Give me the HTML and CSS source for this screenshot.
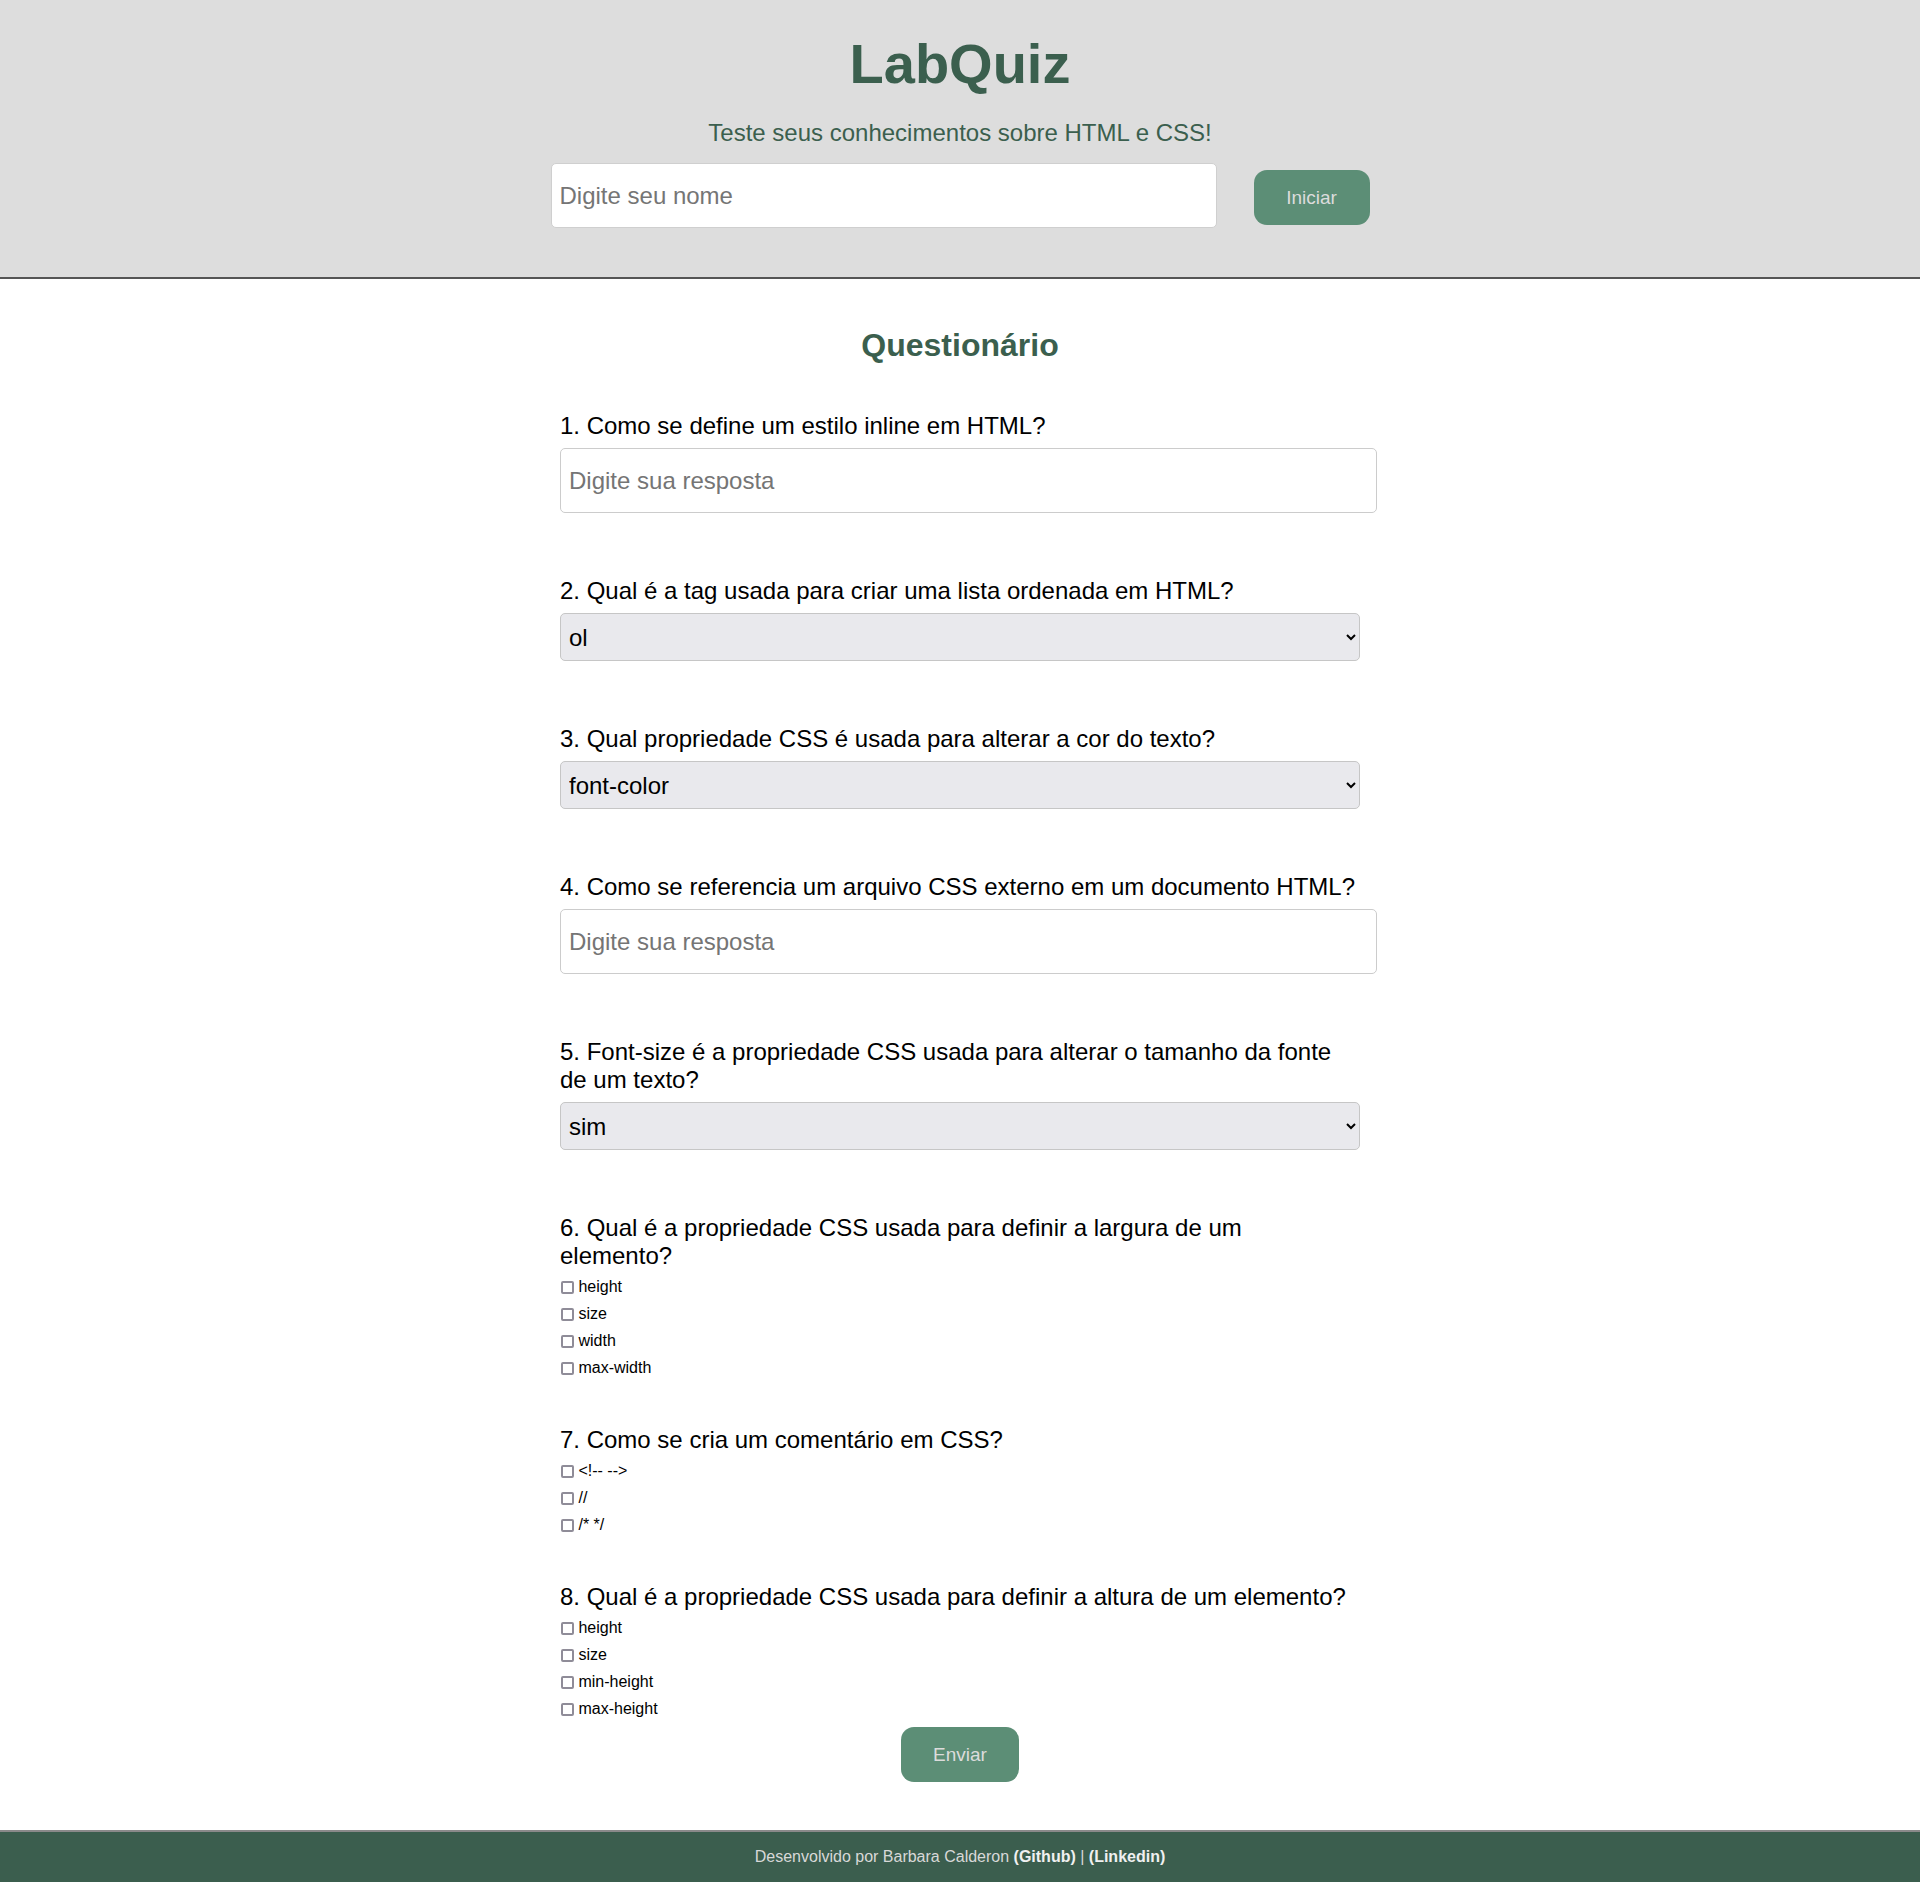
FILE: index.html
```html
<!DOCTYPE html>
<html lang="pt-BR">
<head>
<meta charset="utf-8">
<title>LabQuiz</title>
<link rel="stylesheet" href="styles.css">
</head>
<body>
<header class="header">
  <h1 class="title">LabQuiz</h1>
  <p class="subtitle">Teste seus conhecimentos sobre HTML e CSS!</p>
  <div class="start-row">
    <input class="name-input" type="text" placeholder="Digite seu nome">
    <button class="btn btn-start" type="button">Iniciar</button>
  </div>
</header>

<main class="quiz">
  <h2 class="quiz-title">Questionário</h2>
  <form class="quiz-form">
    <div class="question question-field">
      <label class="question-text">1. Como se define um estilo inline em HTML?</label>
      <input class="answer-input" type="text" placeholder="Digite sua resposta">
    </div>

    <div class="question question-field">
      <label class="question-text">2. Qual é a tag usada para criar uma lista ordenada em HTML?</label>
      <select class="answer-select">
        <option>ol</option>
        <option>ul</option>
        <option>li</option>
      </select>
    </div>

    <div class="question question-field">
      <label class="question-text">3. Qual propriedade CSS é usada para alterar a cor do texto?</label>
      <select class="answer-select">
        <option>font-color</option>
        <option>color</option>
        <option>text-color</option>
      </select>
    </div>

    <div class="question question-field">
      <label class="question-text">4. Como se referencia um arquivo CSS externo em um documento HTML?</label>
      <input class="answer-input" type="text" placeholder="Digite sua resposta">
    </div>

    <div class="question question-field">
      <label class="question-text">5. Font-size é a propriedade CSS usada para alterar o tamanho da fonte de um texto?</label>
      <select class="answer-select">
        <option>sim</option>
        <option>não</option>
      </select>
    </div>

    <div class="question question-check">
      <label class="question-text">6. Qual é a propriedade CSS usada para definir a largura de um elemento?</label>
      <label class="option"><input class="check" type="checkbox"> height</label>
      <label class="option"><input class="check" type="checkbox"> size</label>
      <label class="option"><input class="check" type="checkbox"> width</label>
      <label class="option"><input class="check" type="checkbox"> max-width</label>
    </div>

    <div class="question question-check">
      <label class="question-text">7. Como se cria um comentário em CSS?</label>
      <label class="option"><input class="check" type="checkbox"> &lt;!-- --&gt;</label>
      <label class="option"><input class="check" type="checkbox"> //</label>
      <label class="option"><input class="check" type="checkbox"> /* */</label>
    </div>

    <div class="question question-last">
      <label class="question-text">8. Qual é a propriedade CSS usada para definir a altura de um elemento?</label>
      <label class="option"><input class="check" type="checkbox"> height</label>
      <label class="option"><input class="check" type="checkbox"> size</label>
      <label class="option"><input class="check" type="checkbox"> min-height</label>
      <label class="option"><input class="check" type="checkbox"> max-height</label>
    </div>

    <div class="submit-row">
      <button class="btn btn-send" type="button">Enviar</button>
    </div>
  </form>
</main>

<footer class="footer">
  <p class="footer-text">Desenvolvido por Barbara Calderon <a class="footer-link" href="#">(Github)</a> | <a class="footer-link" href="#">(Linkedin)</a></p>
</footer>
</body>
</html>
```

FILE: styles.css
```css
* {
  box-sizing: border-box;
}

html, body {
  margin: 0;
  padding: 0;
}

body {
  font-family: "Liberation Sans", Arial, Helvetica, sans-serif;
  background: #ffffff;
  color: #000000;
}

/* Header */
.header {
  background: #dddddd;
  border-bottom: 2px solid #555555;
  padding: 32px 0 49px;
  text-align: center;
}

.title {
  margin: 0;
  font-size: 56px;
  line-height: 64px;
  font-weight: bold;
  color: #3b5f4e;
}

.subtitle {
  margin: 23px 0 0;
  font-size: 24px;
  line-height: 28px;
  color: #3b5f4e;
}

.start-row {
  margin-top: 16px;
  display: flex;
  justify-content: center;
  align-items: center;
  gap: 37px;
}

.name-input {
  width: 666px;
  height: 65px;
  padding: 0 8px;
  border: 1px solid #cfcfcf;
  border-radius: 5px;
  background: #ffffff;
  font-family: inherit;
  font-size: 24px;
  color: #000;
}

.name-input::placeholder,
.answer-input::placeholder {
  color: #757575;
}

.btn {
  border: none;
  border-radius: 13px;
  background: #5c8e76;
  color: #dcdcdc;
  font-family: inherit;
  font-size: 19px;
  line-height: 22px;
  padding: 0 32px;
  cursor: pointer;
}

.btn-start {
  height: 55px;
  width: 116px;
  padding: 0;
  margin-top: 4px;
}

/* Quiz */
.quiz {
  width: 800px;
  margin: 0 auto;
  padding-bottom: 48px;
}

.quiz-title {
  margin: 48px 0 47px;
  font-size: 32px;
  line-height: 37px;
  font-weight: bold;
  text-align: center;
  color: #3b5f4e;
}

.question {
  display: flex;
  flex-direction: column;
  align-items: flex-start;
}

.question-field {
  margin-bottom: 63px;
}

.question-check {
  margin-bottom: 48px;
}

.question-text {
  display: block;
  font-size: 24px;
  line-height: 28px;
  padding-top: 1px;
  margin-bottom: 8px;
}

.answer-input {
  width: 817px;
  height: 65px;
  padding: 0 8px;
  border: 1px solid #cccccc;
  border-radius: 5px;
  font-family: inherit;
  font-size: 24px;
  background: #ffffff;
}

.answer-select {
  width: 800px;
  height: 48px;
  padding: 0 4px;
  border: 1px solid #c6c6c6;
  border-radius: 5px;
  background-color: #e9e9ed;
  font-family: inherit;
  font-size: 24px;
  color: #000;
}

.option {
  display: flex;
  align-items: center;
  height: 18px;
  font-size: 16px;
  line-height: 18px;
  margin-bottom: 9px;
  white-space: pre;
}

.question-check .option:last-child,
.question-last .option:last-child {
  margin-bottom: 0;
}

.check {
  appearance: none;
  -webkit-appearance: none;
  margin: 0 0 0 1px;
  width: 13px;
  height: 13px;
  border: 2px solid #8f8c98;
  border-radius: 2px;
  background: #ffffff;
}

.question-last {
  margin-bottom: 9px;
}

.submit-row {
  display: flex;
  justify-content: center;
}

.btn-send {
  width: 118px;
  height: 55px;
  padding: 0;
}

/* Footer */
.footer {
  background: #3b5e4e;
  border-top: 2px solid #8a8a8a;
  height: 52px;
  display: flex;
  align-items: center;
  justify-content: center;
}

.footer-text {
  margin: 0;
  font-size: 16px;
  line-height: 18px;
  color: #d8d8d8;
}

.footer-link {
  color: #f0f0f0;
  font-weight: bold;
  text-decoration: none;
}
```
